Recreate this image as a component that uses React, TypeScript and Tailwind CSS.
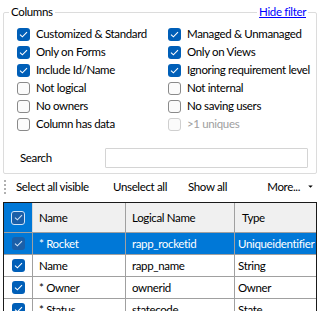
import { ChevronDown } from 'lucide-react';

const leftChecks: [string, boolean][] = [
  ['Customized & Standard', true],
  ['Only on Forms', true],
  ['Include Id/Name', true],
  ['Not logical', false],
  ['No owners', false],
  ['Column has data', false],
];

const rightChecks: [string, boolean, boolean?][] = [
  ['Managed & Unmanaged', true],
  ['Only on Views', true],
  ['Ignoring requirement level', true],
  ['Not internal', false],
  ['No saving users', false],
  ['>1 uniques', false, true],
];

const rows = [
  { name: '* Rocket', logical: 'rapp_rocketid', type: 'Uniqueidentifier', selected: true },
  { name: 'Name', logical: 'rapp_name', type: 'String' },
  { name: '* Owner', logical: 'ownerid', type: 'Owner' },
  { name: '* Status', logical: 'statecode', type: 'State' },
];

function Tick({ color = 'white' }: { color?: string }) {
  return (
    <svg width="9" height="7" viewBox="0 0 9 7" fill="none">
      <path d="M1 3.6 L3.4 5.8 L8 1.2" stroke={color} strokeWidth="1.1" />
    </svg>
  );
}

function Box({ checked, disabled }: { checked: boolean; disabled?: boolean }) {
  if (checked) {
    return (
      <span className="flex h-[13px] w-[13px] shrink-0 items-center justify-center rounded-[3px] bg-[#005fb8]">
        <Tick />
      </span>
    );
  }
  return (
    <span
      className={`h-[13px] w-[13px] shrink-0 rounded-[3px] border bg-[#fbfbfb] ${
        disabled ? 'border-[#cfcfcf]' : 'border-[#8a8a8a]'
      }`}
    />
  );
}

function CheckRow({ label, checked, disabled }: { label: string; checked: boolean; disabled?: boolean }) {
  return (
    <div className="flex h-[18px] items-center gap-[6px]">
      <Box checked={checked} disabled={disabled} />
      <span className={disabled ? 'text-[#a0a0a0]' : 'text-black'}>{label}</span>
    </div>
  );
}

export default function App() {
  return (
    <div
      className="flex h-[311px] w-[321px] flex-col overflow-hidden whitespace-nowrap bg-white text-[11.5px] leading-none tracking-[-0.35px] text-black"
      style={{ fontFamily: 'Lato, "Noto Sans", sans-serif' }}
    >
      {/* filter group box */}
      <div className="relative mx-[3px] mt-[12px] h-[162px] w-[314px] shrink-0 rounded-[2px] border border-[#dcdcdc]">
        <span className="absolute left-[5px] top-[-7px] bg-white px-[2px]">Columns</span>
        <span className="absolute right-[8px] top-[-7px] bg-white px-[2px] text-[#0000ff] underline">
          Hide filter
        </span>

        <div className="grid grid-cols-[151px_1fr] pl-[13px] pt-[12px]">
          <div className="flex flex-col">
            {leftChecks.map(([l, c]) => (
              <CheckRow key={l} label={l} checked={c} />
            ))}
          </div>
          <div className="flex flex-col">
            {rightChecks.map(([l, c, d]) => (
              <CheckRow key={l} label={l} checked={c} disabled={d} />
            ))}
          </div>
        </div>

        <div className="mt-[15px] flex items-center pl-[16px] pr-[8px]">
          <span className="w-[85px]">Search</span>
          <div className="h-[20px] flex-1 rounded-[1px] border border-[#d4d4d4] bg-white" />
        </div>
      </div>

      {/* toolbar */}
      <div className="flex h-[25px] shrink-0 items-center pl-[4px] pr-[6px]">
        <div className="flex w-[12px] flex-col gap-[2px]">
          {[0, 1, 2, 3].map((i) => (
            <span key={i} className="h-[2px] w-[2px] bg-[#b0b0b0]" />
          ))}
        </div>
        <span className="w-[97px]">Select all visible</span>
        <span className="w-[75px]">Unselect all</span>
        <span>Show all</span>
        <span className="ml-auto">More...</span>
        <ChevronDown size={9} strokeWidth={0} fill="black" className="ml-[6px]" />
      </div>

      {/* grid */}
      <div className="ml-[3px] mt-[3px] w-[314px] flex-1 border-l border-r border-t border-[#1a1a1a]">
        <div className="grid h-[30px] grid-cols-[29px_93px_109px_1fr] border-b border-[#a0a0a0] bg-[#f0f0f0]">
          <div className="flex items-center justify-center border-r border-[#d8d8d8] bg-[#0078d7]">
            <span className="flex h-[14px] w-[14px] items-center justify-center rounded-[3px] border border-[#cfe3f7] bg-[#1b5fa8]">
              <Tick color="#cfe3f7" />
            </span>
          </div>
          <div className="flex items-center border-r border-[#a0a0a0] pl-[6px]">Name</div>
          <div className="flex items-center border-r border-[#a0a0a0] pl-[6px]">Logical Name</div>
          <div className="flex items-center pl-[7px]">Type</div>
        </div>
        {rows.map((r) => (
          <div
            key={r.logical}
            className={`grid h-[22px] grid-cols-[29px_93px_109px_1fr] border-b border-[#a0a0a0] ${
              r.selected ? 'bg-[#0078d7] text-white' : 'bg-white'
            }`}
          >
            <div className="flex items-center justify-center border-r border-[#a0a0a0]">
              {r.selected ? (
                <span className="flex h-[13px] w-[13px] items-center justify-center rounded-[3px] bg-[#1b5fa8]">
                  <Tick color="#cfe3f7" />
                </span>
              ) : (
                <Box checked />
              )}
            </div>
            <div className="flex items-center border-r border-[#a0a0a0] pl-[6px]">{r.name}</div>
            <div className="flex items-center border-r border-[#a0a0a0] pl-[6px]">{r.logical}</div>
            <div className="flex items-center overflow-hidden pl-[3px]">{r.type}</div>
          </div>
        ))}
      </div>
    </div>
  );
}
